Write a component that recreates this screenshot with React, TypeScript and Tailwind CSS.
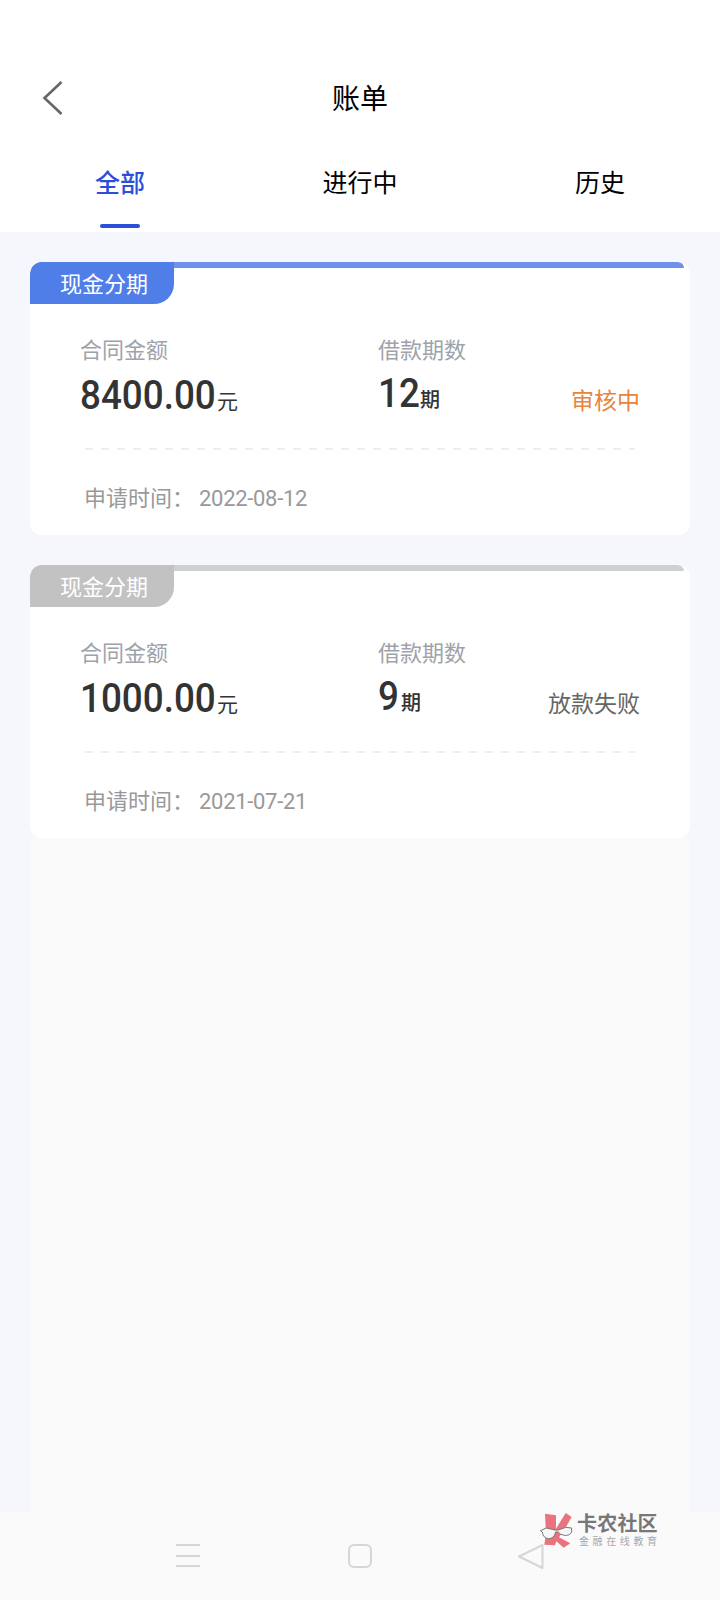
import React from "react";

const cn = '"Roboto", "Noto Sans CJK SC", sans-serif';

type Bill = {
  amount: string;
  periods: string;
  periodsWidth: string;
  status: string;
  statusClass: string;
  date: string;
  barClass: string;
  badgeClass: string;
};

const bills: Bill[] = [
  {
    amount: "8400.00",
    periods: "12",
    periodsWidth: "w-[38px]",
    status: "审核中",
    statusClass: "text-[#e8843c]",
    date: "2022-08-12",
    barClass: "bg-[#7090ee]",
    badgeClass: "bg-[#507ee8]",
  },
  {
    amount: "1000.00",
    periods: "9",
    periodsWidth: "w-[19px]",
    status: "放款失败",
    statusClass: "text-[#666666]",
    date: "2021-07-21",
    barClass: "bg-[#cfd0d2]",
    badgeClass: "bg-[#c2c2c2]",
  },
];

const BillCard = ({ bill }: { bill: Bill }) => (
  <div className="relative h-[273px] overflow-hidden rounded-[12px] bg-white">
    <div className={`absolute left-0 right-[6px] top-0 h-[6px] rounded-tr-[8px] ${bill.barClass}`} />
    <div
      className={`relative flex h-[42px] w-[144px] items-center pl-[30px] pt-[3px] text-[22px] leading-none text-white rounded-tl-[12px] rounded-br-[20px] ${bill.badgeClass}`}
    >
      现金分期
    </div>
    <div className="flex pl-[50px] pt-[33px]">
      <div className="w-[298px]">
        <div className="text-[22px] leading-[28px] text-[#9ea3aa]">合同金额</div>
        <div className="mt-[9px] flex h-[44px] items-end text-[#333333]">
          <span className="inline-block w-[137px] origin-left scale-x-[0.92] whitespace-nowrap text-[40px] font-medium leading-[44px]">
            {bill.amount}
          </span>
          <span className="mb-[2px] text-[21px] leading-[28px]">元</span>
        </div>
      </div>
      <div className="flex-1">
        <div className="text-[22px] leading-[28px] text-[#9ea3aa]">借款期数</div>
        <div className="mt-[7px] flex h-[44px] items-end text-[#333333]">
          <span className={`inline-block origin-left scale-x-[0.92] whitespace-nowrap text-[40px] font-medium leading-[44px] ${bill.periodsWidth}`}>
            {bill.periods}
          </span>
          <span className="mb-[2px] ml-[4px] text-[20px] font-medium leading-[28px]">期</span>
        </div>
      </div>
      <div className={`mr-[50px] mt-[51px] text-[23px] leading-[28px] ${bill.statusClass}`}>{bill.status}</div>
    </div>
    <div className="mx-[55px] mt-[30px] h-[2px] bg-[repeating-linear-gradient(90deg,#eceef2_0,#eceef2_8px,transparent_8px,transparent_16px)]" />
    <div className="flex items-center pl-[54px] pt-[35px] text-[22px] leading-[28px] text-[#999999]">
      <span className="w-[115px]">申请时间：</span>
      <span className="tracking-[-0.3px]">{bill.date}</span>
    </div>
  </div>
);

const App = () => {
  return (
    <div className="flex h-[1600px] w-[720px] flex-col overflow-hidden bg-[#f5f7fc]" style={{ fontFamily: cn }}>
      <header className="h-[232px] shrink-0 bg-white pt-[60px]">
        <div className="relative flex h-[74px] items-center justify-center pt-[6px] text-[28px] leading-none text-black">
          <svg className="absolute left-[41px] top-[20px]" width="24" height="36" viewBox="0 0 24 36" fill="none">
            <path d="M20.5 2 L3.5 18 L20.5 34" stroke="#666666" strokeWidth="2.6" />
          </svg>
          账单
        </div>
        <nav className="grid h-[98px] grid-cols-3 text-center text-[25px] leading-none">
          <div className="relative pt-[37px] font-medium text-[#2b50d8]">
            全部
            <span className="absolute left-[100px] top-[90px] h-[4px] w-[40px] rounded-full bg-[#2b50d8]" />
          </div>
          <div className="pt-[37px] text-black">进行中</div>
          <div className="pt-[37px] text-black">历史</div>
        </nav>
      </header>

      <main className="flex min-h-0 flex-1 flex-col gap-[30px] px-[30px] pt-[30px]">
        {bills.map((bill) => (
          <BillCard key={bill.date} bill={bill} />
        ))}
        <div className="-mt-[30px] flex-1 bg-[#fafafa]" />
      </main>

      <footer className="relative flex h-[88px] shrink-0 bg-[#fafafa]">
        <div className="flex w-full items-start pl-[176px] pt-[32px]">
          <div className="flex h-[23px] w-[24px] flex-col justify-between">
            <span className="h-[2px] bg-[#d6d6d6]" />
            <span className="h-[2px] bg-[#d6d6d6]" />
            <span className="h-[2px] bg-[#d6d6d6]" />
          </div>
          <div className="ml-[148px] h-[24px] w-[24px] rounded-[6px] border-2 border-[#d6d6d6]" />
          <svg className="ml-[145px] -mt-[1px]" width="27" height="27" viewBox="0 0 27 27" fill="none">
            <path d="M25.5 2 V25 L2 13.5 Z" stroke="#d6d6d6" strokeWidth="2" strokeLinejoin="round" />
          </svg>
        </div>
        {/* watermark */}
        <div className="absolute left-[535px] -top-[4px] flex">
          <svg width="50" height="45" viewBox="0 0 150 135" fill="none">
            <path d="M30 17 L63 22 L63 62 L92 15 L110 27 L90 62 L72 88 L106 106 L86 119 L64 100 L60 112 L28 110 L33 78 Z" fill="#e9737e" />
            <path d="M16 68 L34 60 L60 66 L70 66 L92 58 L110 60 L110 72 Q104 84 88 82 Q74 80 70 72 L62 72 Q58 92 40 92 Q24 90 22 72 Z" fill="#f7f7f7" stroke="#777777" strokeWidth="3" />
          </svg>
          <div className="-ml-[8px] flex flex-col pt-[5px]">
            <span className="text-[20px] font-bold leading-[22px] tracking-[0.2px] text-[#777777]">卡农社区</span>
            <span className="mt-[1px] pl-[2px] text-[10px] leading-[12px] tracking-[3.6px] text-[#a8a8a8]">金融在线教育</span>
          </div>
        </div>
      </footer>
    </div>
  );
};

export default App;
